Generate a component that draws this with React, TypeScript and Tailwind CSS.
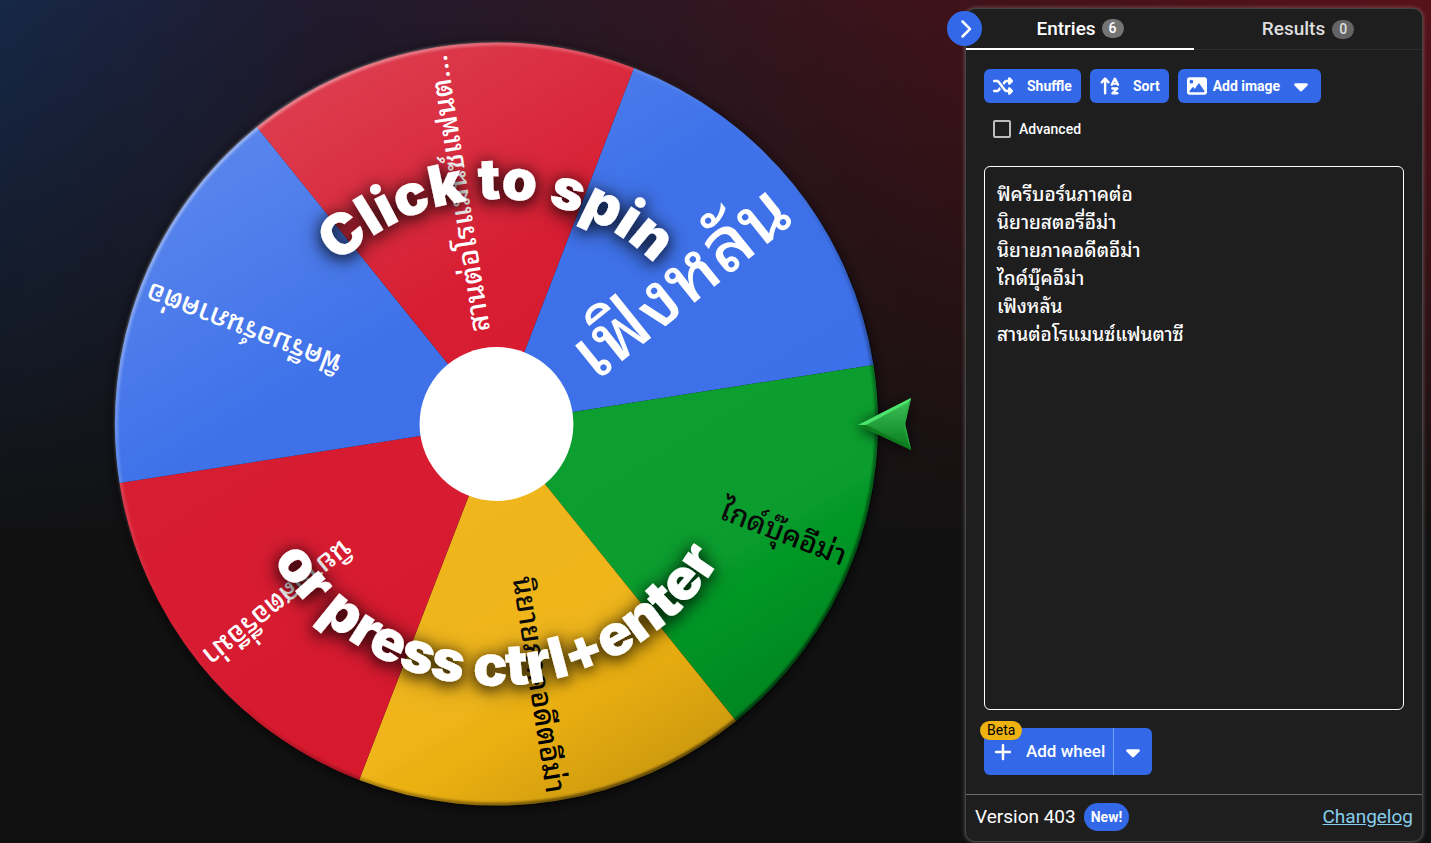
import { useState } from "react";
import {
  FaArrowUpAZ,
  FaCaretDown,
  FaChevronRight,
  FaImage,
  FaPlus,
  FaShuffle,
} from "react-icons/fa6";

type Slice = {
  label: string;
  color: string;
  text: string;
  angle: number;
  size: number;
  end: number;
  baseline: number;
};

const CX = 497;
const CY = 424;
const R = 382;

const small = { size: 29, end: 374, baseline: 8 };

const slices: Slice[] = [
  { label: "เฟิงหลัน", color: "#3369e8", text: "#ffffff", angle: -38.9, size: 75, end: 362, baseline: 30 },
  { label: "ไกด์บุ๊คอีม่า", color: "#009925", text: "#000000", angle: 21.1, ...small },
  { label: "นิยายภาคอดีตอีม่า", color: "#eeb211", text: "#000000", angle: 81.1, ...small },
  { label: "นิยายสตอรี่อีม่า", color: "#d50f25", text: "#ffffff", angle: 141.1, ...small },
  { label: "ฟิครีบอร์นภาคต่อ", color: "#3369e8", text: "#ffffff", angle: 201.1, ...small },
  { label: "สานต่อโรแมนซ์แฟนต...", color: "#d50f25", text: "#ffffff", angle: 261.1, ...small },
];

const entries = [
  "ฟิครีบอร์นภาคต่อ",
  "นิยายสตอรี่อีม่า",
  "นิยายภาคอดีตอีม่า",
  "ไกด์บุ๊คอีม่า",
  "เฟิงหลัน",
  "สานต่อโรแมนซ์แฟนตาซี",
];

function slicePath(mid: number) {
  const point = (deg: number) => {
    const rad = (deg * Math.PI) / 180;
    return `${CX + R * Math.cos(rad)} ${CY + R * Math.sin(rad)}`;
  };
  return `M${CX} ${CY}L${point(mid - 30)}A${R} ${R} 0 0 1 ${point(mid + 30)}Z`;
}

function Wheel() {
  return (
    <svg
      viewBox="0 0 966 843"
      className="h-full w-full font-['Roboto','Noto_Sans_Thai_Looped','Loma','Waree','Garuda','Noto_Sans_Thai',sans-serif]"
    >
      <defs>
        <linearGradient id="shine" x1="0.2" y1="0" x2="0.8" y2="1">
          <stop offset="0" stopColor="#fff" stopOpacity="0.22" />
          <stop offset="0.35" stopColor="#fff" stopOpacity="0.06" />
          <stop offset="0.76" stopColor="#fff" stopOpacity="0.04" />
          <stop offset="0.8" stopColor="#000" stopOpacity="0.01" />
          <stop offset="1" stopColor="#000" stopOpacity="0.2" />
        </linearGradient>
        <linearGradient id="rim" x1="0.15" y1="0.1" x2="0.85" y2="0.9">
          <stop offset="0" stopColor="#fff" stopOpacity="0.4" />
          <stop offset="0.4" stopColor="#fff" stopOpacity="0" />
          <stop offset="0.6" stopColor="#000" stopOpacity="0.1" />
          <stop offset="1" stopColor="#000" stopOpacity="0.6" />
        </linearGradient>
        <linearGradient id="pointer" x1="0" y1="0" x2="0" y2="1">
          <stop offset="0" stopColor="#3fc45a" />
          <stop offset="1" stopColor="#087a1c" />
        </linearGradient>
        <filter id="drop" x="-20%" y="-20%" width="140%" height="140%">
          <feDropShadow dx="0" dy="2" stdDeviation="7" floodColor="#000" floodOpacity="0.75" />
        </filter>
        <filter id="rimBlur">
          <feGaussianBlur stdDeviation="1" />
        </filter>
        <filter id="glyphShadow" x="-20%" y="-20%" width="140%" height="140%">
          <feDropShadow dx="0" dy="3" stdDeviation="7" floodColor="#000" floodOpacity="0.65" />
          <feDropShadow dx="0" dy="2" stdDeviation="10" floodColor="#000" floodOpacity="0.5" />
        </filter>
        <path id="upper" d="M272 424A225 225 0 0 1 722 424" />
        <path id="lower" d="M235 424A262 262 0 0 0 759 424" />
      </defs>
      <circle cx={CX} cy={CY} r={R} fill="#111" filter="url(#drop)" />
      {slices.map((s) => (
        <path key={s.label} d={slicePath(s.angle)} fill={s.color} />
      ))}
      {slices.map((s) => (
        <text
          key={s.label}
          x={s.end}
          y={s.baseline}
          fill={s.text}
          fontSize={s.size}
          fontWeight={500}
          textAnchor="end"
          transform={`translate(${CX} ${CY}) rotate(${s.angle})`}
        >
          {s.label}
        </text>
      ))}
      <circle cx={CX} cy={CY} r={R} fill="url(#shine)" />
      <circle cx={CX} cy={CY} r={R - 1} fill="none" stroke="url(#rim)" strokeWidth="4" filter="url(#rimBlur)" />
      <circle cx={CX} cy={CY} r="77" fill="#fff" />
      <g
        fill="#fff"
        fontWeight="900"
        textAnchor="middle"
        filter="url(#glyphShadow)"
        className="font-['Inter',sans-serif]"
      >
        <text fontSize="57">
          <textPath href="#upper" startOffset="50%">Click to spin</textPath>
        </text>
        <text fontSize="57">
          <textPath href="#lower" startOffset="50%">or press ctrl+enter</textPath>
        </text>
      </g>
      <g filter="url(#drop)">
        <path d="M859 425L912 398L906 424L912 450Z" fill="url(#pointer)" />
        <path d="M859 425L912 398L910 402L867 425Z" fill="#4be36c" />
        <path d="M859 425L912 450L910 446L867 425Z" fill="#0a7a1e" />
        <path d="M912 398L906 424L912 450L910 446L904 424L910 402Z" fill="#25a53e" />
      </g>
    </svg>
  );
}

export default function App() {
  const [advanced, setAdvanced] = useState(false);
  return (
    <div className="flex h-screen overflow-hidden bg-[linear-gradient(to_bottom,transparent,#111_65%),linear-gradient(to_right,#162747,#201a2e_22%,#2b1723_42%,#3f1219_66%,#571219)] font-['Roboto',sans-serif] text-white">
      <main className="min-w-0 flex-1">
        <button type="button" aria-label="Spin the wheel" className="block h-full w-full">
          <Wheel />
        </button>
      </main>

      <aside className="relative mt-2 mr-2 mb-px flex w-[458px] shrink-0 flex-col rounded-[10px] border border-[#444444] bg-[#1e1e1e] shadow-[0_0_4px_rgba(255,255,255,0.3)]">
        <button
          type="button"
          aria-label="Hide panel"
          className="absolute top-[2px] -left-[19px] flex size-[35px] items-center justify-center rounded-full bg-[#3369e8]"
        >
          <FaChevronRight className="size-5" />
        </button>

        <div role="tablist" className="flex h-[41px] text-[19px] leading-6 font-medium">
          <button
            type="button"
            role="tab"
            aria-selected="true"
            className="flex flex-1 items-center justify-center gap-[6px] border-b-2 border-white"
          >
            Entries
            <span className="rounded-full bg-[#757575] px-[7px] text-[14px] leading-[19px]">6</span>
          </button>
          <button
            type="button"
            role="tab"
            aria-selected="false"
            className="flex flex-1 items-center justify-center gap-[7px] border-b border-[#2c2c2c] text-[#dddddd]"
          >
            Results
            <span className="rounded-full bg-[#646464] px-[7px] text-[14px] leading-[19px]">0</span>
          </button>
        </div>

        <div className="flex flex-1 flex-col px-[18px] pt-[19px] pb-[19px]">
          <div className="flex gap-[9px] text-[14px] leading-5 font-bold">
            <button type="button" className="flex h-[34px] items-center gap-[14px] rounded-[6px] bg-[#3369e8] px-[9px]">
              <FaShuffle className="size-5" />
              Shuffle
            </button>
            <button type="button" className="flex h-[34px] items-center gap-3 rounded-[6px] bg-[#3369e8] px-[9px]">
              <FaArrowUpAZ className="size-[22px]" />
              Sort
            </button>
            <button type="button" className="flex h-[34px] items-center gap-[6px] rounded-[6px] bg-[#3369e8] px-[9px]">
              <FaImage className="size-5" />
              Add image
              <FaCaretDown className="ml-1 size-[22px]" />
            </button>
          </div>

          <label className="mt-4 flex w-fit items-center gap-2 pl-[9px] text-[14px] leading-5 font-medium">
            <input
              type="checkbox"
              checked={advanced}
              onChange={(e) => setAdvanced(e.target.checked)}
              className="size-[18px] appearance-none rounded-[2px] border-2 border-[#bdbdbd] checked:bg-[#3369e8]"
            />
            Advanced
          </label>

          <textarea
            aria-label="Entries"
            spellCheck={false}
            defaultValue={entries.join("\n")}
            className="mt-[27px] w-full flex-1 resize-none rounded-[6px] border border-white bg-transparent px-3 pt-[14px] pb-3 font-['Roboto','Noto_Sans_Thai_Looped','Loma','Waree','Garuda','Noto_Sans_Thai',sans-serif] text-[19px] leading-7 font-medium outline-none"
          />

          <div className="relative mt-[18px] flex h-[47px] w-fit overflow-visible rounded-[6px] bg-[#3369e8] text-[17px] font-medium">
            <button type="button" className="flex items-center gap-[13px] pr-2 pl-[9px]">
              <FaPlus className="size-5" />
              Add wheel
            </button>
            <button
              type="button"
              aria-label="More wheel options"
              className="flex w-[39px] items-center justify-center border-l border-[#6fa0ff]"
            >
              <FaCaretDown className="size-[22px]" />
            </button>
            <span className="absolute -top-[7px] -left-1 rounded-full bg-[#eeb211] px-[7px] text-[14px] leading-[19px] font-normal text-black">
              Beta
            </span>
          </div>
        </div>

        <footer className="flex h-[47px] items-center border-t border-[#6a6a6a] px-[9px] pb-[2px] text-[19px] leading-6">
          Version 403
          <span className="ml-2 rounded-full bg-[#3369e8] px-[7px] text-[14px] leading-7 font-bold">New!</span>
          <a href="#changelog" className="ml-auto text-[#87ceeb] underline">
            Changelog
          </a>
        </footer>
      </aside>
    </div>
  );
}
